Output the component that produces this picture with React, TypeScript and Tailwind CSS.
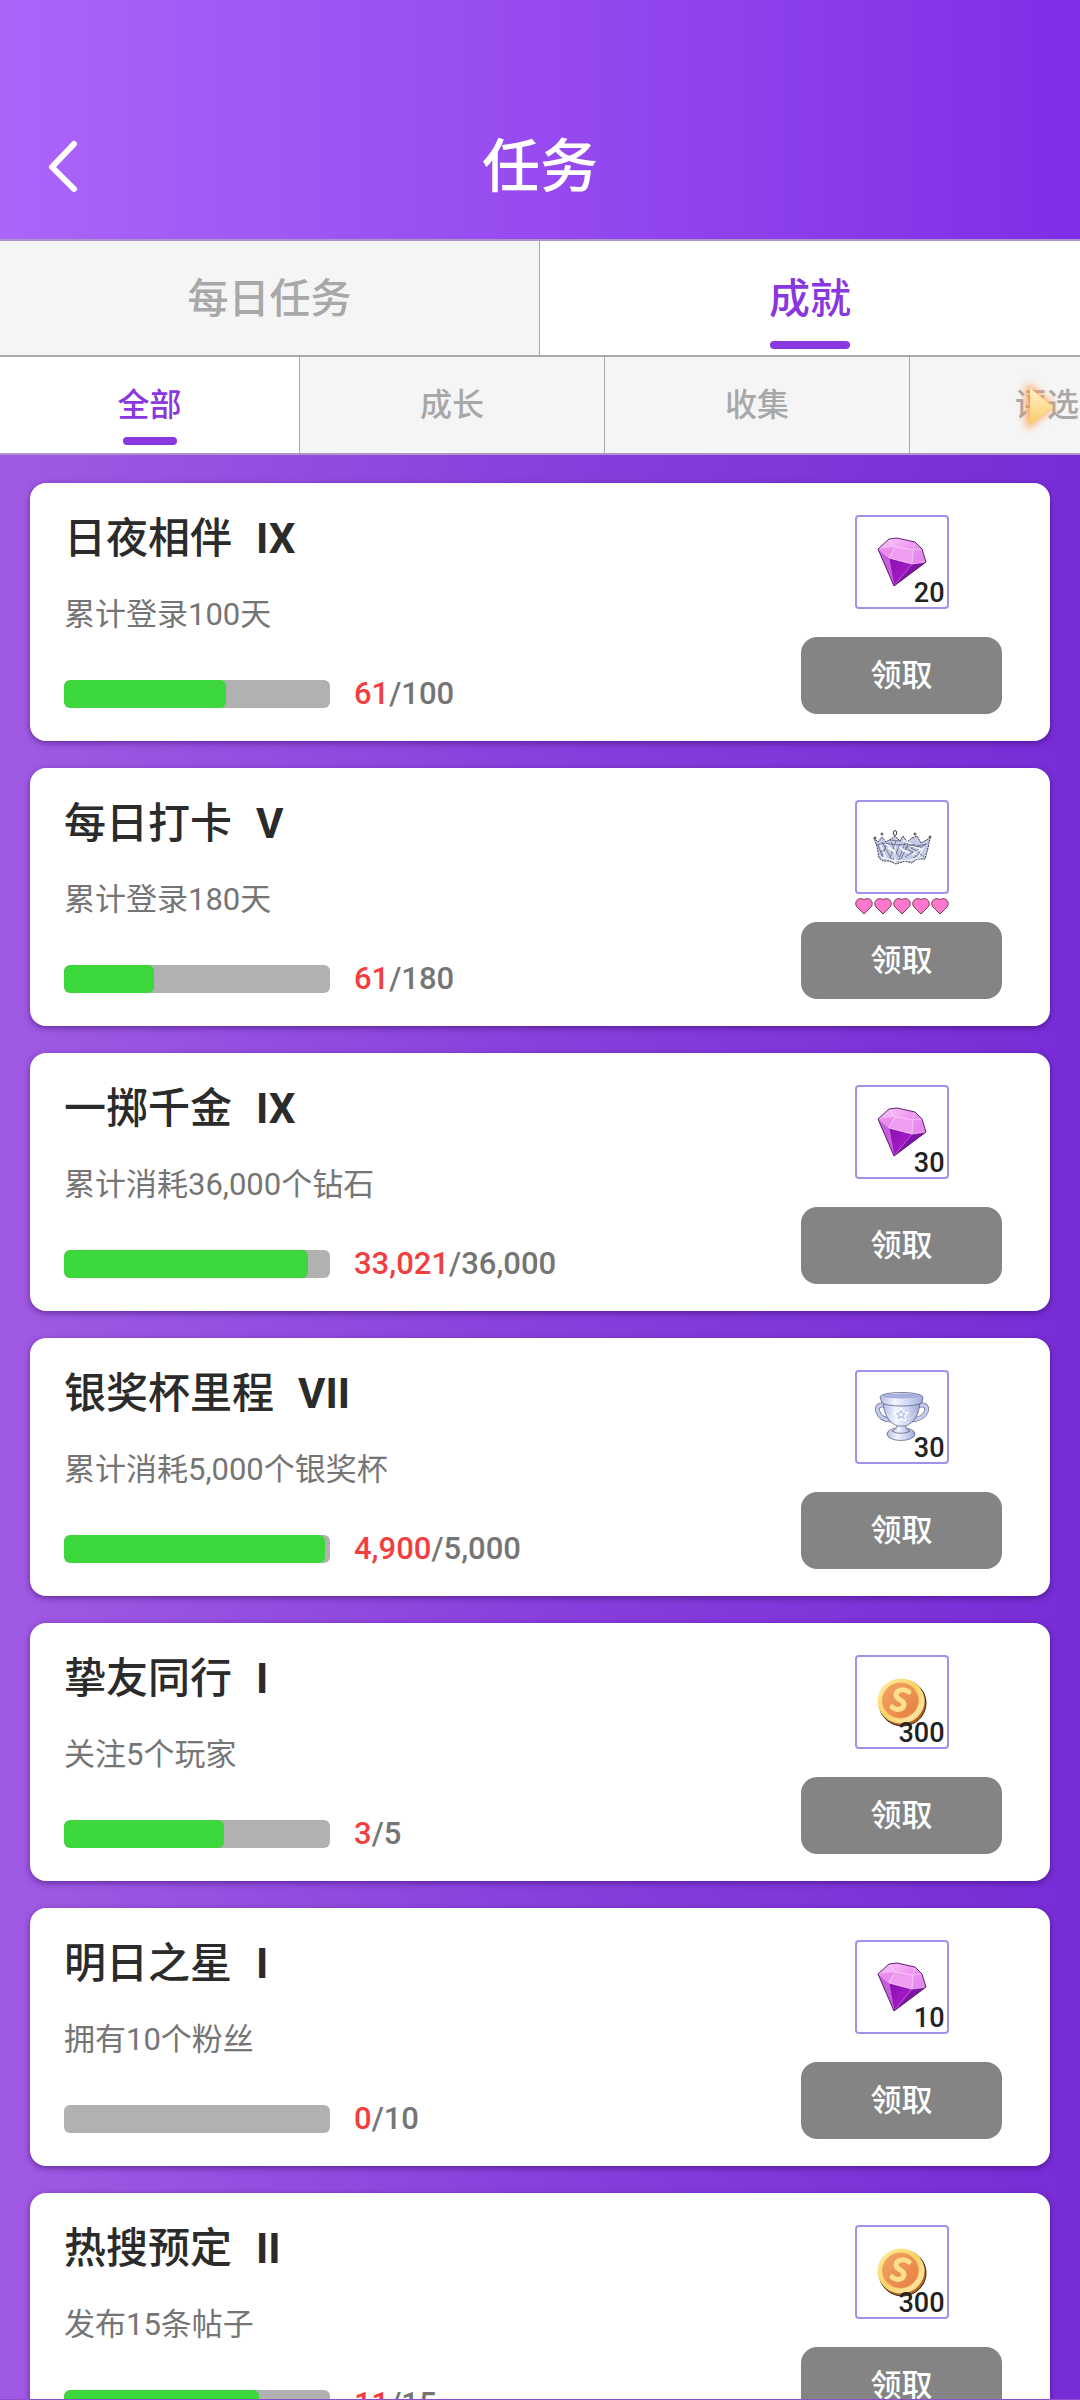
import { useState } from "react";

type RewardKind = "gem" | "crown" | "trophy" | "coin";

type Task = {
  title: string;
  level: string;
  desc: string;
  current: number;
  total: number;
  reward: RewardKind;
  amount?: number;
  hearts?: number;
};

const mainTabs = ["每日任务", "成就"];

const subTabs = [
  { text: "全部", width: "w-[300px]" },
  { text: "成长", width: "w-[305px]" },
  { text: "收集", width: "w-[305px]" },
  { text: "评选", width: "w-[275px]" },
];

const tasks: Task[] = [
  { title: "日夜相伴", level: "IX", desc: "累计登录100天", current: 61, total: 100, reward: "gem", amount: 20 },
  { title: "每日打卡", level: "V", desc: "累计登录180天", current: 61, total: 180, reward: "crown", hearts: 5 },
  { title: "一掷千金", level: "IX", desc: "累计消耗36,000个钻石", current: 33021, total: 36000, reward: "gem", amount: 30 },
  { title: "银奖杯里程", level: "VII", desc: "累计消耗5,000个银奖杯", current: 4900, total: 5000, reward: "trophy", amount: 30 },
  { title: "挚友同行", level: "I", desc: "关注5个玩家", current: 3, total: 5, reward: "coin", amount: 300 },
  { title: "明日之星", level: "I", desc: "拥有10个粉丝", current: 0, total: 10, reward: "gem", amount: 10 },
  { title: "热搜预定", level: "II", desc: "发布15条帖子", current: 11, total: 15, reward: "coin", amount: 300 },
];

const Gem = () => (
  <svg viewBox="2 2 90 90" className="size-full" aria-hidden="true">
    <defs>
      <linearGradient id="gemTop" x1="0" y1="0" x2="1" y2="1">
        <stop offset="0" stopColor="#fbd0f8" />
        <stop offset="0.5" stopColor="#ec8ff0" />
        <stop offset="1" stopColor="#d77be8" />
      </linearGradient>
      <linearGradient id="gemBody" x1="0" y1="0" x2="1" y2="1">
        <stop offset="0" stopColor="#8a0fb0" />
        <stop offset="1" stopColor="#b021cf" />
      </linearGradient>
    </defs>
    <path d="M23 34 34 24 42 23 60 27 67 34 71 47 39 71Z" fill="url(#gemTop)" />
    <path d="M23 34 34 43 39 71Z" fill="#c85fdc" />
    <path d="M34 43 57 49 39 71Z" fill="url(#gemBody)" />
    <path d="M57 49 71 47 39 71Z" fill="#8213a8" />
    <path d="M40 32 58 35 57 49 34 43Z" fill="#ee9df0" />
    <path d="M23 34 34 24 40 32 34 43Z" fill="#f4b5f3" />
    <path d="M23 34 40 32 34 43Z" fill="#e98eea" />
    <path d="M34 24 40 32 58 35 67 34M40 32 34 43 57 49 71 47M58 35 57 49M60 27 58 35" fill="none" stroke="#fbd3fa" strokeWidth="0.7" />
    <path d="M34 43 39 71 57 49" fill="none" stroke="#d06be2" strokeWidth="0.6" />
    <path d="M23 34 34 24 42 23 60 27 67 34 71 47 39 71Z" fill="none" stroke="#4a0d62" strokeWidth="0.9" strokeLinejoin="round" />
  </svg>
);

const Crown = () => (
  <svg viewBox="2 2 90 90" className="size-full" aria-hidden="true">
    <path
      d="M19 38 23 42 27 37 31 42 36 39 40 36 45 41 48 36 52 42 57 38 62 36 66 43 75 38 73 48 70 59 62 59 57 63 50 61 41 64 34 61 28 61 24 58 22 46Z"
      fill="#c6cce4"
      stroke="#3b3f55"
      strokeWidth="1"
      strokeDasharray="2 0.8"
      strokeLinejoin="round"
    />
    <path
      d="M23 45 28 58M27 42 37 60M32 43 27 56M36 42 44 57M41 41 35 58M45 44 38 61M50 43 43 62M53 44 46 59M60 44 50 48 58 52 50 57M66 46 56 48 66 53 58 58M71 44 61 51 69 57"
      fill="none"
      stroke="#6a7294"
      strokeWidth="0.9"
    />
    <path
      d="M25 44 31 58M30 43 40 52 33 48M40 45 40 63M44 47 54 53 47 50M55 46 66 49 57 55M69 47 63 57M48 40 56 44M26 57 40 61 55 60 68 57"
      fill="none"
      stroke="#fff"
      strokeWidth="1.1"
    />
    <path d="M21 45 30 43 41 45 52 44 61 46 72 44M34 40 46 41M25 52 30 50" fill="none" stroke="#4d5473" strokeWidth="0.7" />
    <g fill="#fff" stroke="#25262e" strokeWidth="0.9">
      <circle cx="20" cy="38" r="1" />
      <circle cx="27" cy="34" r="1" />
      <ellipse cx="40" cy="33" rx="1.7" ry="2.4" />
      <circle cx="60" cy="34" r="1" />
      <circle cx="75" cy="37" r="1" />
    </g>
  </svg>
);

const Trophy = () => (
  <svg viewBox="2 2 90 90" className="size-full" aria-hidden="true">
    <defs>
      <linearGradient id="cup" x1="0" y1="0" x2="1" y2="0">
        <stop offset="0" stopColor="#b4bde9" />
        <stop offset="0.35" stopColor="#f3f4fe" />
        <stop offset="0.65" stopColor="#d2d8f5" />
        <stop offset="1" stopColor="#9fa9d6" />
      </linearGradient>
    </defs>
    <g fill="none" strokeLinecap="round">
      <path d="M31 36C24 33 21 37 23 42 25 48 31 50 36 50M63 36C70 33 73 37 71 42 69 47 64 49 58 50" stroke="#474c66" strokeWidth="4.6" />
      <path d="M31 36C24 33 21 37 23 42 25 48 31 50 36 50M63 36C70 33 73 37 71 42 69 47 64 49 58 50" stroke="#c3caee" strokeWidth="3.6" />
    </g>
    <g fill="url(#cup)" stroke="#50556f" strokeWidth="0.7">
      <ellipse cx="46" cy="64" rx="14" ry="6.5" />
      <path d="M42 54h9c-1 4 1 5 4 7-4 3-14 3-18 0 4-2 6-4 5-7Z" />
      <path d="M28 32C29 44 33 53 43 56h7C60 53 64 44 65 32Z" />
      <path d="M25 27C26 21 66 21 68 27L67 33C60 37 33 37 27 33Z" />
    </g>
    <ellipse cx="46.5" cy="26" rx="19" ry="2.6" fill="#a5b0de" />
    <path d="m46 38 2.3 4 4.7.5-3.2 3.5.9 4.6-4.7-2-4.6 2 .9-4.6-3.3-3.5 4.7-.5Z" fill="#c0c9ef" stroke="#fff" strokeWidth="1.2" />
    <path d="M32 44c2 3 5 5 8 5M60 44c-2 3-4 5-8 5" fill="none" stroke="#fff" strokeWidth="0.8" strokeDasharray="1.5 1" />
    <circle cx="46" cy="44.5" r="1.6" fill="#fff" />
  </svg>
);

const Coin = () => (
  <svg viewBox="2 2 90 90" className="size-full" aria-hidden="true">
    <defs>
      <linearGradient id="coinRim" x1="0" y1="0" x2="1" y2="1">
        <stop offset="0" stopColor="#fff0a8" />
        <stop offset="0.5" stopColor="#fbd164" />
        <stop offset="0.8" stopColor="#fbe3a0" />
        <stop offset="1" stopColor="#f0ae3c" />
      </linearGradient>
      <linearGradient id="coinFace" x1="0" y1="0" x2="1" y2="1">
        <stop offset="0" stopColor="#f2a766" />
        <stop offset="1" stopColor="#e77d40" />
      </linearGradient>
    </defs>
    <ellipse cx="47.5" cy="48" rx="23.5" ry="23" fill="#b9651b" stroke="#2e2417" strokeWidth="1" />
    <ellipse cx="46" cy="46" rx="23.5" ry="22.5" fill="url(#coinRim)" />
    <ellipse cx="45.5" cy="45.5" rx="18" ry="17.5" fill="url(#coinFace)" stroke="#e8a04c" strokeWidth="0.8" />
    {/* embossed S */}
    <path d="M54 37C49 33 41 35 41 40 41 45 50 45 49 50 48 55 41 56 37 52" fill="none" stroke="#fde08a" strokeWidth="5" strokeLinecap="round" />
  </svg>
);

const rewardIcons = { gem: Gem, crown: Crown, trophy: Trophy, coin: Coin };

const Heart = () => (
  <svg viewBox="0 0 18 18" className="size-[18px]" aria-hidden="true">
    <path d="M9 17 1.5 9.5C-1 5 3-.5 9 2.500 15-.5 19 5 16.500 9.500Z" fill="#ff78cd" stroke="#6b2d47" strokeWidth="0.9" />
  </svg>
);

const Reward = ({ task }: { task: Task }) => {
  const Icon = rewardIcons[task.reward];
  return (
    <div className="flex flex-col items-center">
      <div className="relative size-[94px] rounded border-2 border-[#a091ec]">
        <Icon />
        {task.amount !== undefined && (
          <span className="absolute right-0.5 bottom-0 text-[27px] leading-7 font-medium text-[#222]">{task.amount}</span>
        )}
      </div>
      <div className="flex h-7 gap-px pt-[3px]">
        {Array.from({ length: task.hearts ?? 0 }, (_, i) => (
          <Heart key={i} />
        ))}
      </div>
      <button type="button" className="h-[77px] w-[201px] rounded-2xl bg-[#848484] pt-0.5 text-[31px] font-medium text-white">
        领取
      </button>
    </div>
  );
};

const TaskCard = ({ task }: { task: Task }) => (
  <li className="flex h-[258px] shrink-0 justify-between rounded-2xl bg-white pt-8 pr-12 pl-[34px] shadow-[0_2px_6px_rgba(40,0,90,0.5)]">
    <div>
      <h2 className="flex h-12 items-center gap-6 text-[42px] leading-[44px] font-medium text-[#2b2b2b]">
        {task.title}
        <span className="font-bold">{task.level}</span>
      </h2>
      <p className="mt-[30px] h-11 text-[31px] leading-[44px] text-[#757575]">{task.desc}</p>
      <div className="mt-[43px] flex h-7 items-center gap-6">
        <div
          className="h-7 w-[266px] overflow-hidden rounded-md bg-[#b1b1b1]"
          role="progressbar"
          aria-label={task.title}
          aria-valuenow={task.current}
          aria-valuemax={task.total}
        >
          <div className="h-full rounded-md bg-[#3bd73b]" style={{ width: `${(task.current / task.total) * 100}%` }} />
        </div>
        <p className="text-[31px] leading-[30px] font-medium text-[#757575]">
          <span className="text-[#f23e3e]">{task.current.toLocaleString("en-US")}</span>/{task.total.toLocaleString("en-US")}
        </p>
      </div>
    </div>
    <Reward task={task} />
  </li>
);

export default function App() {
  const [mainTab, setMainTab] = useState(1);
  const [subTab, setSubTab] = useState(0);

  return (
    <div className="flex h-screen flex-col overflow-hidden border-b border-[#8a4fd0] bg-[#8a3fdc] font-['Roboto','Noto_Sans_CJK_SC',sans-serif]">
      <header className="grid h-[241px] shrink-0 grid-cols-3 items-center border-b-2 border-[#ad95c9] bg-linear-to-r from-[#ac64f9] via-[#964aef] to-[#7f2de6] pt-[94px]">
        <button type="button" aria-label="返回" className="ml-11 w-9">
          <svg viewBox="0 0 36 56" className="h-14 w-9" fill="none" stroke="#fff" strokeWidth="6" strokeLinecap="round" strokeLinejoin="round">
            <path d="M30 5 8 28l22 22" />
          </svg>
        </button>
        <h1 className="text-center text-[58px] leading-none font-medium text-white">任务</h1>
      </header>

      {/* Main tabs */}
      <nav className="flex h-[116px] shrink-0 border-b-2 border-[#a8a8a8]">
        {mainTabs.map((text, i) => (
          <button
            key={text}
            type="button"
            onClick={() => setMainTab(i)}
            className={`relative w-1/2 border-r border-[#a8a8a8] pt-1 text-[41px] font-medium last:border-r-0 ${
              mainTab === i ? "bg-white text-[#8838de]" : "bg-[#f5f5f5] text-[#a8a8a8]"
            }`}
          >
            {text}
            {mainTab === i && <span className="absolute bottom-1.5 left-1/2 h-2 w-20 -translate-x-1/2 rounded-full bg-[#8838de]" />}
          </button>
        ))}
      </nav>

      <nav className="relative flex h-[98px] shrink-0 overflow-hidden border-b-2 border-[#ad95c9]">
        {subTabs.map((tab, i) => (
          <button
            key={tab.text}
            type="button"
            onClick={() => setSubTab(i)}
            className={`relative shrink-0 border-r border-[#a8a8a8] text-[32px] font-medium ${tab.width} ${
              subTab === i ? "bg-white text-[#8838de]" : "bg-[#f5f5f5] text-[#a8a8a8]"
            }`}
          >
            {tab.text}
            {subTab === i && <span className="absolute bottom-2 left-1/2 h-2 w-[54px] -translate-x-1/2 rounded bg-[#8838de]" />}
          </button>
        ))}
        <svg viewBox="0 0 60 70" className="absolute top-3.5 right-3.5 h-[70px] w-[60px]" aria-hidden="true">
          <defs>
            <filter id="glow" x="-60%" y="-40%" width="220%" height="180%">
              <feGaussianBlur stdDeviation="4" />
            </filter>
            <linearGradient id="arrow" x1="0" y1="0" x2="0" y2="1">
              <stop offset="0" stopColor="#fff3c8" />
              <stop offset="1" stopColor="#fbc964" />
            </linearGradient>
          </defs>
          <path d="M22 15 46 35 22 55Z" fill="#ff9a50" stroke="#ff9a50" strokeWidth="3" filter="url(#glow)" />
          <path d="M24 17 47 36 24 54Z" fill="url(#arrow)" />
        </svg>
      </nav>

      <main className="min-h-0 flex-1 overflow-hidden bg-linear-to-r from-[#a05ae3] via-[#893fdc] to-[#782cd6] px-[30px] pt-7">
        <ul className="flex flex-col gap-[27px]">
          {tasks.map((task) => (
            <TaskCard key={task.title} task={task} />
          ))}
        </ul>
      </main>
    </div>
  );
}
